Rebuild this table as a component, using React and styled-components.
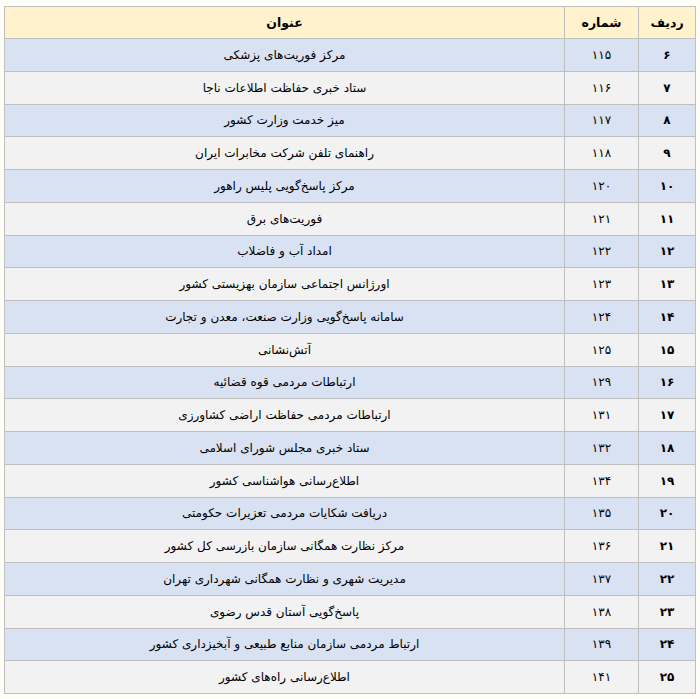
import React from 'react'
import styled, { createGlobalStyle } from 'styled-components'

const GlobalStyle = createGlobalStyle`
    html, body {
        margin: 0;
        padding: 0;
        background: #fefef7;
    }
    body {
        font-family: "DejaVu Sans", sans-serif;
    }
`

const Page = styled.div`
    padding: 6px 4px 0 4px;
    direction: rtl;
`

const Table = styled.table`
    width: 692px;
    border-collapse: collapse;
    table-layout: fixed;
    font-size: 12px;
    color: #000;
`

const HeadCell = styled.th`
    height: 31px;
    padding: 0;
    background: #fff2cc;
    border: 1px solid #bfbfbf;
    font-weight: bold;
    font-size: 12.5px;
    text-align: center;
    width: ${p => p.$width || 'auto'};
`

const Row = styled.tr`
    background: ${p => (p.$odd ? '#d9e2f3' : '#f2f2f2')};
`

const Cell = styled.td`
    height: 31.75px;
    padding: 0 4px;
    border: 1px solid #bfbfbf;
    text-align: center;
    font-weight: ${p => (p.$bold ? 'bold' : 'normal')};
    white-space: nowrap;
`

const rows = [
    ['۶', '۱۱۵', 'مرکز فوریت‌های پزشکی'],
    ['۷', '۱۱۶', 'ستاد خبری حفاظت اطلاعات ناجا'],
    ['۸', '۱۱۷', 'میز خدمت وزارت کشور'],
    ['۹', '۱۱۸', 'راهنمای تلفن شرکت مخابرات ایران'],
    ['۱۰', '۱۲۰', 'مرکز پاسخ‌گویی پلیس راهور'],
    ['۱۱', '۱۲۱', 'فوریت‌های برق'],
    ['۱۲', '۱۲۲', 'امداد آب و فاضلاب'],
    ['۱۳', '۱۲۳', 'اورژانس اجتماعی سازمان بهزیستی کشور'],
    ['۱۴', '۱۲۴', 'سامانه پاسخ‌گویی وزارت صنعت، معدن و تجارت'],
    ['۱۵', '۱۲۵', 'آتش‌نشانی'],
    ['۱۶', '۱۲۹', 'ارتباطات مردمی قوه قضائیه'],
    ['۱۷', '۱۳۱', 'ارتباطات مردمی حفاظت اراضی کشاورزی'],
    ['۱۸', '۱۳۲', 'ستاد خبری مجلس شورای اسلامی'],
    ['۱۹', '۱۳۴', 'اطلاع‌رسانی هواشناسی کشور'],
    ['۲۰', '۱۳۵', 'دریافت شکایات مردمی تعزیرات حکومتی'],
    ['۲۱', '۱۳۶', 'مرکز نظارت همگانی سازمان بازرسی کل کشور'],
    ['۲۲', '۱۳۷', 'مدیریت شهری و نظارت همگانی شهرداری تهران'],
    ['۲۳', '۱۳۸', 'پاسخ‌گویی آستان قدس رضوی'],
    ['۲۴', '۱۳۹', 'ارتباط مردمی سازمان منابع طبیعی و آبخیزداری کشور'],
    ['۲۵', '۱۴۱', 'اطلاع‌رسانی راه‌های کشور'],
]

export default function App() {
    return (
        <Page>
            <GlobalStyle />
            <Table>
                <thead>
                    <tr>
                        <HeadCell $width="56px">ردیف</HeadCell>
                        <HeadCell $width="73px">شماره</HeadCell>
                        <HeadCell>عنوان</HeadCell>
                    </tr>
                </thead>
                <tbody>
                    {rows.map((r, i) => (
                        <Row key={r[0]} $odd={i % 2 === 0}>
                            <Cell $bold>{r[0]}</Cell>
                            <Cell>{r[1]}</Cell>
                            <Cell>{r[2]}</Cell>
                        </Row>
                    ))}
                </tbody>
            </Table>
        </Page>
    )
}
